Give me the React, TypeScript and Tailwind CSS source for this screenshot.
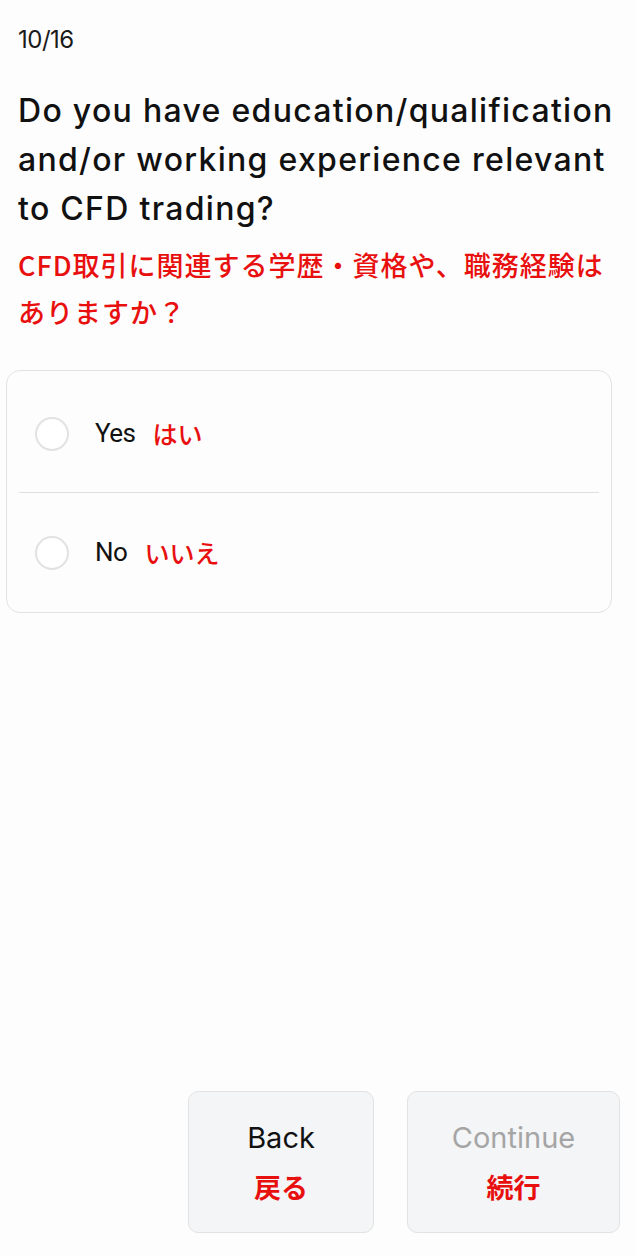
import React, { useState } from 'react'

const jp = { fontFamily: '"Noto Sans CJK JP", "Noto Sans", sans-serif' }

function App() {
  const [choice, setChoice] = useState<string | null>(null)

  const options = [
    { value: 'yes', label: 'Yes', jp: 'はい' },
    { value: 'no', label: 'No', jp: 'いいえ' },
  ]

  return (
    <div
      className="min-h-screen bg-[#fdfdfd] flex flex-col text-[#111]"
      style={{ fontFamily: 'Inter, "Noto Sans CJK JP", sans-serif' }}
    >
      <div className="px-[18px] pt-[24px]">
        <div className="text-[24px] leading-[32px] tracking-[-0.5px] text-[#1a1a1a]">10/16</div>
        <h1 className="mt-[30px] text-[32px] leading-[49px] font-medium tracking-[1.3px] whitespace-nowrap">
          Do you have education/qualification
          <br />
          and/or working experience relevant
          <br />
          to CFD trading?
        </h1>
        <p className="mt-[8px] text-[27px] leading-[47px] font-medium tracking-[1px] whitespace-nowrap text-[#e8100f]" style={jp}>
          CFD取引に関連する学歴・資格や、職務経験は
          <br />
          ありますか？
        </p>
      </div>

      {/* options card */}
      <div className="mx-[6px] mt-[35px] w-[606px] rounded-[14px] border border-[#e3e3e3] bg-[#fdfdfd] px-[12px]">
        {options.map((opt, i) => (
          <button
            key={opt.value}
            onClick={() => setChoice(opt.value)}
            className={`flex w-full items-center ${i === 0 ? 'h-[122px] border-b border-[#e0e0e0] pt-[4px]' : 'h-[119px]'}`}
          >
            <span className="ml-[16px] flex h-[34px] w-[34px] items-center justify-center rounded-full border-2 border-[#e2e2e2] bg-white">
              {choice === opt.value && <span className="h-[16px] w-[16px] rounded-full bg-[#e8100f]" />}
            </span>
            <span className="ml-[26px] text-[26px] tracking-[-0.5px]" style={{ fontFamily: 'Roboto, sans-serif' }}>
              {opt.label}
            </span>
            <span className="ml-[17px] text-[25px] font-medium text-[#e8100f]" style={jp}>
              {opt.jp}
            </span>
          </button>
        ))}
      </div>

      {/* footer buttons */}
      <div className="mt-auto flex justify-end gap-[33px] pr-[16px] pb-[23px]">
        <button className="flex h-[142px] w-[186px] flex-col items-center justify-center rounded-[10px] border border-[#e2e2e2] bg-[#f4f5f6]">
          <span className="text-[29px] leading-[36px] text-[#111]">Back</span>
          <span className="mt-[14px] text-[27px] leading-[34px] font-semibold text-[#e8100f]" style={jp}>戻る</span>
        </button>
        <button
          disabled={!choice}
          className="flex h-[142px] w-[213px] flex-col items-center justify-center rounded-[10px] border border-[#e2e2e2] bg-[#f4f5f6]"
        >
          <span className={`text-[29px] leading-[36px] ${choice ? 'text-[#111]' : 'text-[#a5a5a5]'}`}>Continue</span>
          <span className="mt-[14px] text-[27px] leading-[34px] font-semibold text-[#e8100f]" style={jp}>続行</span>
        </button>
      </div>
    </div>
  )
}

export default App
